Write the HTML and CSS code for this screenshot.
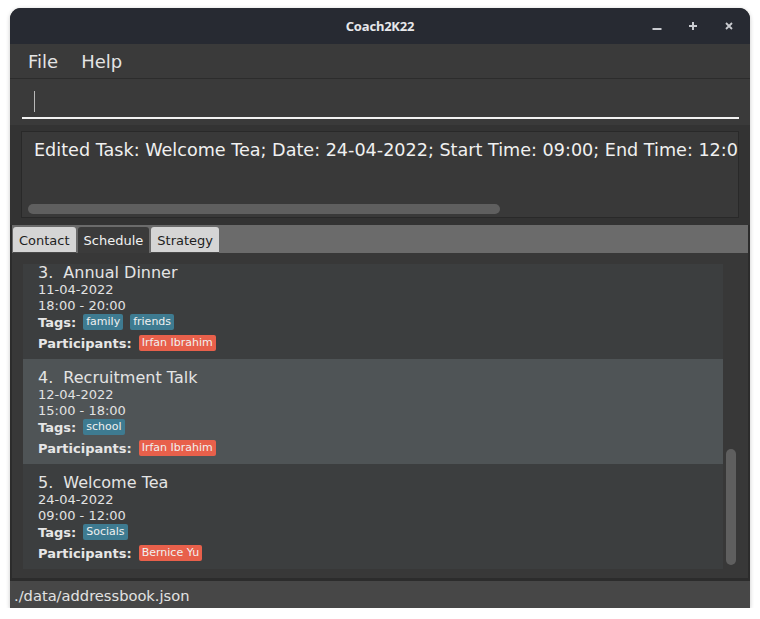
FILE: index.html
```html
<!DOCTYPE html>
<html lang="en">
<head>
<meta charset="utf-8">
<title>Coach2K22</title>
<link rel="stylesheet" href="styles.css">
</head>
<body>
<div class="window">
  <header class="titlebar">
    <span class="spacer"></span>
    <span class="title">Coach2K22</span>
    <div class="controls">
      <svg class="ctl" width="20" height="20" viewBox="0 0 20 20"><rect x="5.5" y="12" width="9" height="2" fill="#c9cbd0"/></svg>
      <svg class="ctl" width="20" height="20" viewBox="0 0 20 20"><path d="M10 6v8M6 10h8" stroke="#c9cbd0" stroke-width="2" fill="none"/></svg>
      <svg class="ctl" width="20" height="20" viewBox="0 0 20 20"><path d="M7 7l6 6M13 7l-6 6" stroke="#c9cbd0" stroke-width="1.8" fill="none"/></svg>
    </div>
  </header>
  <nav class="menubar"><span class="menu-item">File</span><span class="menu-item">Help</span></nav>
  <div class="command">
    <div class="command-field"><span class="caret"></span></div>
  </div>
  <section class="result">
    <div class="result-box">
      <p class="result-text">Edited Task: Welcome Tea; Date: 24-04-2022; Start Time: 09:00; End Time: 12:00</p>
      <div class="hscroll"><div class="hthumb"></div></div>
    </div>
  </section>
  <div class="tabpane">
    <div class="tabs">
      <div class="tab">Contact</div>
      <div class="tab active">Schedule</div>
      <div class="tab">Strategy</div>
    </div>
    <section class="listpane">
      <div class="viewport">
        <article class="card even first">
          <div class="card-title"><span class="card-id">3. </span><span>Annual Dinner</span></div>
          <div class="card-line">11-04-2022</div>
          <div class="card-line">18:00 - 20:00</div>
          <div class="card-row"><span class="card-label">Tags:</span><span class="tag">family</span><span class="tag">friends</span></div>
          <div class="card-row people"><span class="card-label">Participants:</span><span class="tag person">Irfan Ibrahim</span></div>
        </article>
        <article class="card odd">
          <div class="card-title"><span class="card-id">4. </span><span>Recruitment Talk</span></div>
          <div class="card-line">12-04-2022</div>
          <div class="card-line">15:00 - 18:00</div>
          <div class="card-row"><span class="card-label">Tags:</span><span class="tag">school</span></div>
          <div class="card-row people"><span class="card-label">Participants:</span><span class="tag person">Irfan Ibrahim</span></div>
        </article>
        <article class="card even">
          <div class="card-title"><span class="card-id">5. </span><span>Welcome Tea</span></div>
          <div class="card-line">24-04-2022</div>
          <div class="card-line">09:00 - 12:00</div>
          <div class="card-row"><span class="card-label">Tags:</span><span class="tag">Socials</span></div>
          <div class="card-row people"><span class="card-label">Participants:</span><span class="tag person">Bernice Yu</span></div>
        </article>
      </div>
      <div class="vscroll"><div class="vthumb"></div></div>
    </section>
  </div>
  <footer class="status">./data/addressbook.json</footer>
</div>
</body>
</html>
```

FILE: styles.css
```css
html, body {
  margin: 0;
  padding: 0;
  background: #ffffff;
}

body {
  font-family: "DejaVu Sans", sans-serif;
  padding: 8px 10px 0 10px;
}

.window {
  width: 740px;
  height: 600px;
  display: flex;
  flex-direction: column;
  border-radius: 11px 11px 0 0;
  overflow: hidden;
  background: #383838;
  box-shadow: 0 1px 4px rgba(0, 0, 0, 0.22);
}

/* title bar */
.titlebar {
  height: 36px;
  flex: none;
  background: #272a32;
  display: grid;
  grid-template-columns: 1fr auto 1fr;
  align-items: center;
}

.title {
  font-family: "Noto Sans", sans-serif;
  font-weight: bold;
  font-size: 13px;
  color: #e6e7ea;
  letter-spacing: -0.2px;
}

.controls {
  display: flex;
  justify-content: flex-end;
  gap: 16px;
  padding-right: 11px;
}

.ctl {
  display: block;
}

/* menu bar */
.menubar {
  flex: none;
  background: #3a3a3a;
  border-bottom: 1px solid #2c2c2c;
  display: flex;
  align-items: center;
  gap: 23px;
  padding-left: 18px;
  padding-top: 1px;
  box-sizing: border-box;
  height: 35px;
}

.menu-item {
  font-size: 18px;
  color: #e4e4e4;
}

/* command box */
.command {
  height: 46px;
  flex: none;
  background: #3a3a3a;
  padding: 0 11px 0 12px;
  box-sizing: border-box;
}

.command-field {
  height: 40px;
  border-bottom: 2px solid #f2f2f2;
  box-sizing: border-box;
  display: flex;
  align-items: flex-start;
  padding: 12px 0 0 12px;
}

.caret {
  width: 1px;
  height: 21px;
  background: #b8b8b8;
}

/* result display */
.result {
  height: 100px;
  flex: none;
  background: #333333;
  padding: 6px 11px 7px 11px;
  box-sizing: border-box;
}

.result-box {
  height: 87px;
  box-sizing: border-box;
  border: 1px solid #292929;
  background: #393939;
  display: flex;
  flex-direction: column;
  justify-content: space-between;
  overflow: hidden;
}

.result-text {
  margin: 0;
  padding: 8px 0 0 12px;
  font-size: 17.6px;
  color: #f0f0f0;
  white-space: nowrap;
}

.hscroll {
  padding: 0 0 3px 6px;
}

.hthumb {
  width: 472px;
  height: 10px;
  border-radius: 5px;
  background: #5f5f5f;
}

/* tab pane */
.tabpane {
  flex: 1;
  display: flex;
  flex-direction: column;
  border-left: 2px solid #2c2c2c;
  border-right: 2px solid #2c2c2c;
  border-bottom: 3px solid #2c2c2c;
  min-height: 0;
}

.tabs {
  height: 28px;
  flex: none;
  background: #6b6b6b;
  display: flex;
  align-items: flex-end;
  gap: 2px;
  padding-left: 1px;
}

.tab {
  height: 26px;
  box-sizing: border-box;
  padding: 1px 6px 0 6px;
  display: flex;
  align-items: center;
  font-size: 13px;
  color: #1e1e1e;
  background: #d5d5d5;
  border-radius: 3px 3px 0 0;
  border-bottom: 1px solid #4a4a4a;
}

.tab.active {
  background: #3b3b3b;
  color: #f2f2f2;
  border-bottom-color: #3b3b3b;
}

.listpane {
  flex: 1;
  background: #383838;
  display: flex;
  padding: 11px 10px 9px 11px;
  min-height: 0;
}

.viewport {
  width: 700px;
  overflow: hidden;
}

.vscroll {
  width: 15px;
  display: flex;
  flex-direction: column;
  justify-content: flex-end;
  padding: 0 0 4px 3px;
  box-sizing: border-box;
}

.vthumb {
  width: 10px;
  height: 116px;
  border-radius: 5px;
  background: #5f5f5f;
}

/* cards */
.card {
  height: 105px;
  box-sizing: border-box;
  padding: 9px 15px 8px 15px;
  display: flex;
  flex-direction: column;
  color: #e2e2e2;
}

.card.first {
  margin-top: -10px;
}

.card.even {
  background: #3c3e3f;
}

.card.odd {
  background: #4f5456;
}

.card-title {
  height: 19px;
  line-height: 19px;
  font-size: 16px;
  display: flex;
  gap: 5px;
  white-space: pre;
  color: #e4e4e4;
}

.card-line {
  height: 16px;
  line-height: 16px;
  font-size: 13px;
}

.card-row {
  height: 16px;
  display: flex;
  align-items: center;
  gap: 7px;
}

.card-row.people {
  margin-top: 5px;
  gap: 7px;
}

.card-label {
  font-size: 13px;
  font-weight: bold;
  color: #e6e6e6;
}

.tag {
  font-size: 11px;
  line-height: 14px;
  padding: 1px 3px;
  border-radius: 2px;
  background: #3e7b91;
  color: #f0f0f0;
}

.tag.person {
  background: #e8604b;
}

/* status bar */
.status {
  height: 27px;
  flex: none;
  background: #474747;
  color: #e2e2e2;
  font-size: 14.67px;
  display: flex;
  align-items: center;
  padding-left: 4px;
  padding-top: 1px;
  box-sizing: border-box;
}
```
